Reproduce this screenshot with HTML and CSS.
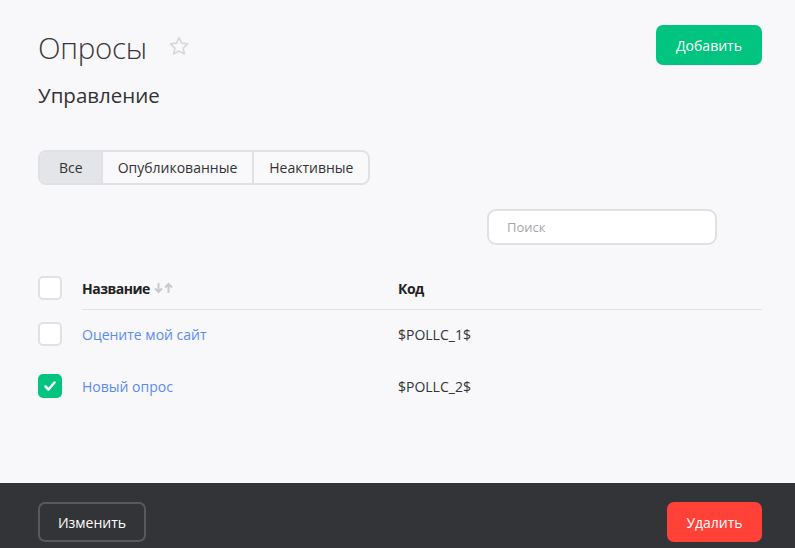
FILE: index.html
```html
<!DOCTYPE html>
<html lang="ru">
<head>
<meta charset="utf-8">
<link rel="stylesheet" href="styles.css">
</head>
<body>
<div class="page">
  <main class="content">
    <header class="top">
      <div class="title-row">
        <h1 class="title">Опросы</h1>
        <svg class="star" width="20" height="20" viewBox="0 0 24 23"><path d="M12 1.5l3.1 6.6 7.2.9-5.3 5 1.4 7.1L12 17.6l-6.4 3.5L7 14l-5.3-5 7.2-.9z" fill="none" stroke="#d6d8de" stroke-width="2" stroke-linejoin="round"/></svg>
      </div>
      <button class="btn btn-green">Добавить</button>
    </header>
    <h2 class="subtitle">Управление</h2>
    <div class="tabs">
      <div class="tab active">Все</div>
      <div class="tab">Опубликованные</div>
      <div class="tab">Неактивные</div>
    </div>
    <div class="search-row">
      <input class="search" type="text" placeholder="Поиск">
    </div>
    <div class="table">
      <div class="row head">
        <span class="cb"></span>
        <div class="cell name">Название <svg class="sort" width="20" height="12" viewBox="0 0 20 12"><path d="M4.5 1v9M1 6.5l3.5 3.5 3.5-3.5M14.5 11V2M11 5.5L14.5 2 18 5.5" fill="none" stroke="#c9cacf" stroke-width="2"/></svg></div>
        <div class="cell code">Код</div>
      </div>
      <div class="row">
        <span class="cb"></span>
        <div class="cell name link">Оцените мой сайт</div>
        <div class="cell code">$POLLC_1$</div>
      </div>
      <div class="row">
        <span class="cb checked"><svg width="14" height="12" viewBox="0 0 14 12"><path d="M2.5 6.5l3 3 6-7" fill="none" stroke="#fff" stroke-width="2.5" stroke-linecap="round" stroke-linejoin="round"/></svg></span>
        <div class="cell name link">Новый опрос</div>
        <div class="cell code">$POLLC_2$</div>
      </div>
    </div>
  </main>
  <footer class="footer">
    <button class="btn btn-outline">Изменить</button>
    <button class="btn btn-red">Удалить</button>
  </footer>
</div>
</body>
</html>
```

FILE: styles.css
```css
* { box-sizing: border-box; }
html, body { margin: 0; padding: 0; }
body {
  font-family: "Open Sans", "Noto Sans", sans-serif;
  background: #f8f8fa;
  color: #333;
  width: 795px;
  height: 548px;
  overflow: hidden;
}
.page {
  display: flex;
  flex-direction: column;
  height: 548px;
}
.content {
  flex: 1;
  padding: 25px 33px 0 38px;
}
.top {
  display: flex;
  justify-content: space-between;
  align-items: flex-start;
}
.title-row {
  display: flex;
  align-items: center;
  gap: 22px;
  padding-top: 6px;
}
.title {
  margin: 0;
  font-weight: 300;
  font-size: 29.5px;
  line-height: 34px;
  color: #3a3a3a;
  letter-spacing: -0.3px;
}
.star { margin-top: -4px; }
.btn {
  font-family: "Open Sans", "Noto Sans", sans-serif;
  font-size: 14px;
  border-radius: 7px;
  border: none;
  cursor: pointer;
}
.btn-green {
  background: #00c47f;
  color: #fff;
  width: 106px;
  height: 40px;
}
.subtitle {
  margin: 17px 0 0;
  font-weight: 400;
  font-size: 20.5px;
  line-height: 26px;
  color: #333;
}
.tabs {
  display: inline-flex;
  margin-top: 42px;
  border: 2px solid #e0e1e5;
  border-radius: 8px;
  overflow: hidden;
  height: 35px;
  background: #f9f9fb;
}
.tab {
  display: flex;
  align-items: center;
  padding: 0 15px;
  font-size: 14px;
  color: #333;
  border-left: 2px solid #e0e1e5;
}
.tab:first-child { border-left: none; padding: 0 18px 0 19px; }
.tab.active { background: #e4e5e8; }
.search-row {
  display: flex;
  padding-left: 449px;
  margin-top: 24px;
}
.search {
  width: 230px;
  height: 36px;
  border: 2px solid #e0e1e5;
  border-radius: 9px;
  background: #fff;
  padding: 0 18px;
  font-family: "Open Sans", "Noto Sans", sans-serif;
  font-size: 13px;
  outline: none;
}
.search::placeholder { color: #a3a6ad; }
.table { margin-top: 31px; }
.row {
  display: flex;
  align-items: center;
  height: 52px;
  font-size: 14px;
}
.row.head { height: 24px; margin-bottom: 8px; position: relative; }
.row.head::after {
  content: "";
  position: absolute;
  left: 44px;
  right: 0;
  bottom: -10px;
  border-bottom: 1px solid #e0e1e5;
}
.cb {
  width: 24px;
  height: 24px;
  flex: none;
  border: 2px solid #e0e1e5;
  border-radius: 5px;
  background: #fff;
  display: flex;
  align-items: center;
  justify-content: center;
}
.cb.checked { background: #00c47f; border-color: #00c47f; }
.cell.name { margin-left: 20px; width: 316px; display: flex; align-items: center; }
.head .cell { font-weight: 700; color: #222; letter-spacing: -0.5px; }
.sort { margin-left: 4px; }
.link { color: #5a8bf2; }
.code { color: #333; }
.footer {
  height: 65px;
  background: #333438;
  display: flex;
  justify-content: space-between;
  align-items: flex-start;
  padding: 19px 33px 0 38px;
}
.btn-outline {
  background: transparent;
  border: 2px solid #57595e;
  color: #fff;
  width: 108px;
  height: 40px;
  font-size: 14px;
}
.btn-red {
  background: #ff4137;
  color: #fff;
  width: 95px;
  height: 40px;
  font-size: 14px;
}
```
